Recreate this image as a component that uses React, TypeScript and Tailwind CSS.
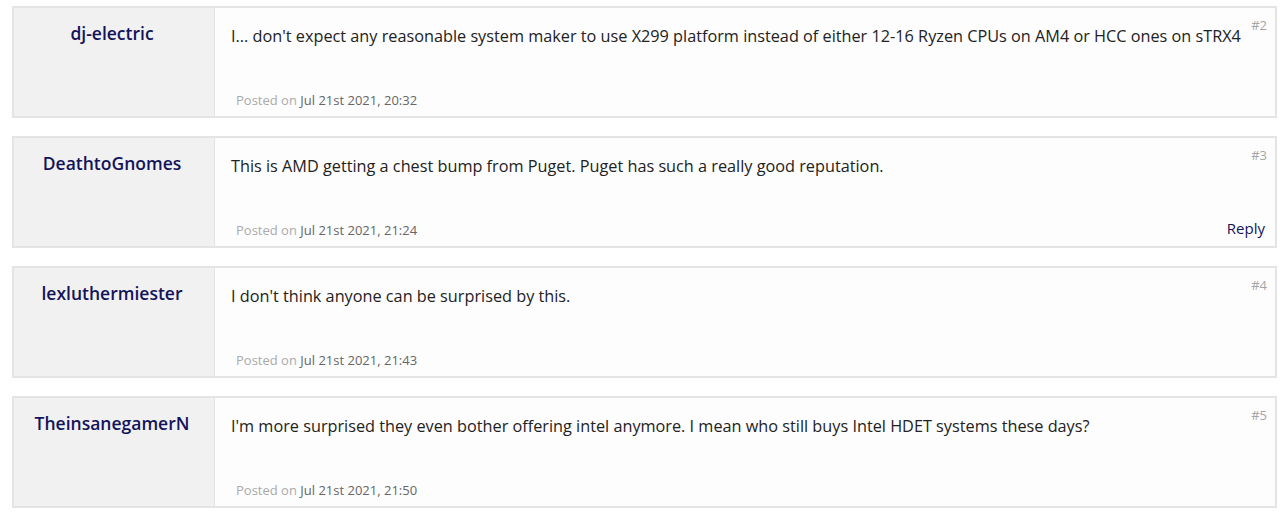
import React from "react";

const posts = [
  {
    user: "dj-electric",
    text: "I... don't expect any reasonable system maker to use X299 platform instead of either 12-16 Ryzen CPUs on AM4 or HCC ones on sTRX4",
    date: "Jul 21st 2021, 20:32",
    num: "#2",
    reply: false,
  },
  {
    user: "DeathtoGnomes",
    text: "This is AMD getting a chest bump from Puget. Puget has such a really good reputation.",
    date: "Jul 21st 2021, 21:24",
    num: "#3",
    reply: true,
  },
  {
    user: "lexluthermiester",
    text: "I don't think anyone can be surprised by this.",
    date: "Jul 21st 2021, 21:43",
    num: "#4",
    reply: false,
  },
  {
    user: "TheinsanegamerN",
    text: "I'm more surprised they even bother offering intel anymore. I mean who still buys Intel HDET systems these days?",
    date: "Jul 21st 2021, 21:50",
    num: "#5",
    reply: false,
  },
];

export default function App() {
  return (
    <div
      className="w-[1280px] h-[514px] bg-white overflow-hidden pl-3 pr-[3px] pt-[6px] flex flex-col gap-[18px]"
      style={{ fontFamily: '"Open Sans", "Noto Sans", sans-serif' }}
    >
      {posts.map((p) => (
        <div
          key={p.num}
          className="flex h-[112px] border-2 border-[#e4e4e4] bg-[#fdfdfd] shrink-0"
        >
          <div className="w-[201px] shrink-0 bg-[#f1f1f1] border-r border-[#e2e2e2] flex justify-center pt-[13px] pr-[4px]">
            <span className="text-[17.5px] leading-[24px] font-semibold text-[#14145a]">
              {p.user}
            </span>
          </div>
          <div className="flex-1 flex flex-col pl-[16px] pr-[10px] relative">
            <span className="absolute right-[8px] top-[8px] text-[13px] text-[#a5a5a5]">
              {p.num}
            </span>
            <p className="pt-[16px] text-[16.25px] leading-[24px] text-[#222]">
              {p.text}
            </p>
            <div className="mt-auto pb-[6px] pl-[5px] flex items-end justify-between">
              <span className="text-[13px] leading-[20px] text-[#aaa]">
                Posted on <span className="text-[#666]">{p.date}</span>
              </span>
              {p.reply && (
                <span className="mb-[2px] text-[15px] leading-[20px] font-medium text-[#14145a]">
                  Reply
                </span>
              )}
            </div>
          </div>
        </div>
      ))}
    </div>
  );
}
